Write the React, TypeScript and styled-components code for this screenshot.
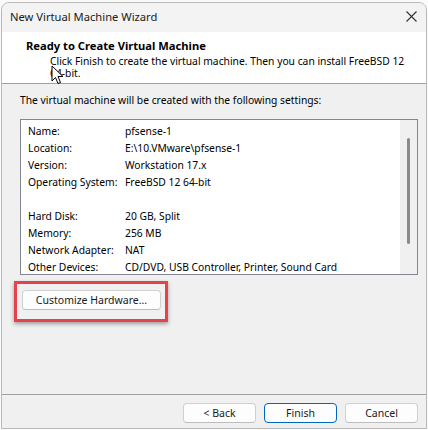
import React from "react";
import styled, { createGlobalStyle } from "styled-components";

const Global = createGlobalStyle`
  html, body { margin: 0; padding: 0; background: #ffffff; }
  body { font-family: "Noto Sans", "Open Sans", sans-serif; font-size: 10.3px; color: #000; }
  * { box-sizing: border-box; }
`;

const Page = styled.div`
  width: 428px;
  height: 430px;
  padding: 2px 1px 0 1px;
  background: #fafafa;
`;

const Window = styled.div`
  position: relative;
  width: 426px;
  height: 427px;
  border: 1px solid #b9b9b9;
  border-radius: 8px 8px 0 0;
  overflow: hidden;
  display: flex;
  flex-direction: column;
  background: #f0f0f0;
`;

const TitleBar = styled.div`
  height: 29px;
  flex: none;
  display: flex;
  align-items: center;
  justify-content: space-between;
  padding: 0 9px 2px 8px;
  background: #f3f3f3;
  font-size: 11.2px;
  color: #1a1a1a;
`;

const Close = styled.div`
  width: 11px;
  height: 11px;
  display: flex;
`;

const Header = styled.div`
  position: relative;
  height: 52px;
  flex: none;
  background: #ffffff;
  border-bottom: 1px solid #a0a0a0;
  padding: 6px 0 0 24px;
`;

const Heading = styled.div`
  font-weight: 700;
  font-size: 11.2px;
  line-height: 15px;
`;

const Description = styled.div`
  width: 364px;
  margin: 2px 0 0 24px;
  line-height: 12px;
`;

const Cursor = styled.svg`
  position: absolute;
  left: 49px;
  top: 33px;
`;

const Body = styled.div`
  flex: 1;
  padding: 9px 0 0 18px;
  display: flex;
  flex-direction: column;
  align-items: flex-start;
`;

const Intro = styled.div`
  line-height: 15px;
`;

const ListBox = styled.div`
  margin-top: 11px;
  width: 398px;
  height: 156px;
  border: 1px solid #828790;
  background: #ffffff;
  display: flex;
  overflow: hidden;
`;

const Rows = styled.div`
  flex: 1;
  padding: 3px 0 0 7px;
`;

const Row = styled.div`
  display: grid;
  grid-template-columns: 97px 1fr;
  height: 17px;
  line-height: 17px;
  white-space: nowrap;
`;

const ScrollTrack = styled.div`
  width: 17px;
  flex: none;
  background: #f0f0f0;
  display: flex;
  justify-content: center;
  padding-top: 18px;
`;

const Thumb = styled.div`
  width: 3px;
  height: 106px;
  border-radius: 2px;
  background: #8a8a8a;
`;

const Highlight = styled.div`
  margin: 6px 0 0 -6px;
  padding: 6px 4px 9px 5px;
  border: 3px solid #e5434b;
  box-shadow: 0 2px 4px rgba(0, 0, 0, 0.35);
`;

const Button = styled.button<{ $primary?: boolean; $w?: number }>`
  height: 20px;
  width: ${(p) => p.$w ?? 73}px;
  padding: 0;
  border: 1px solid ${(p) => (p.$primary ? "#0067c0" : "#d0d0d0")};
  border-bottom-color: ${(p) => (p.$primary ? "#0067c0" : "#bdbdbd")};
  border-radius: 4px;
  background: #fdfdfd;
  font-family: inherit;
  font-size: 10.5px;
  color: #1a1a1a;
  line-height: 18px;
`;

const Footer = styled.div`
  height: 34px;
  flex: none;
  border-top: 1px solid #a0a0a0;
  display: flex;
  justify-content: flex-end;
  gap: 8px;
  padding: 8px 8px 0 0;
`;

const rows: [string, string][] = [
  ["Name:", "pfsense-1"],
  ["Location:", "E:\\10.VMware\\pfsense-1"],
  ["Version:", "Workstation 17.x"],
  ["Operating System:", "FreeBSD 12 64-bit"],
  ["", ""],
  ["Hard Disk:", "20 GB, Split"],
  ["Memory:", "256 MB"],
  ["Network Adapter:", "NAT"],
  ["Other Devices:", "CD/DVD, USB Controller, Printer, Sound Card"],
];

export default function App() {
  return (
    <Page>
      <Global />
      <Window>
        <TitleBar>
          <span>New Virtual Machine Wizard</span>
          <Close>
            <svg width="11" height="11" viewBox="0 0 11 11">
              <path d="M0.5 0.5 L10.5 10.5 M10.5 0.5 L0.5 10.5" stroke="#333" strokeWidth="1.1" fill="none" />
            </svg>
          </Close>
        </TitleBar>
        <Header>
          <Heading>Ready to Create Virtual Machine</Heading>
          <Description>
            Click Finish to create the virtual machine. Then you can install FreeBSD 12 64-bit.
          </Description>
          <Cursor width="14" height="20" viewBox="0 0 14 20">
            <path d="M1 1 L1 16 L4.5 12.5 L7 18.5 L9.5 17.5 L7 11.5 L12 11.5 Z" fill="#fff" stroke="#000" strokeWidth="1" strokeLinejoin="round" />
          </Cursor>
        </Header>
        <Body>
          <Intro>The virtual machine will be created with the following settings:</Intro>
          <ListBox>
            <Rows>
              {rows.map(([k, v], i) => (
                <Row key={i}>
                  <span>{k}</span>
                  <span>{v}</span>
                </Row>
              ))}
            </Rows>
            <ScrollTrack>
              <Thumb />
            </ScrollTrack>
          </ListBox>
          <Highlight>
            <Button $w={139}>Customize Hardware...</Button>
          </Highlight>
        </Body>
        <Footer>
          <Button>&lt; Back</Button>
          <Button $primary>Finish</Button>
          <Button>Cancel</Button>
        </Footer>
      </Window>
    </Page>
  );
}
